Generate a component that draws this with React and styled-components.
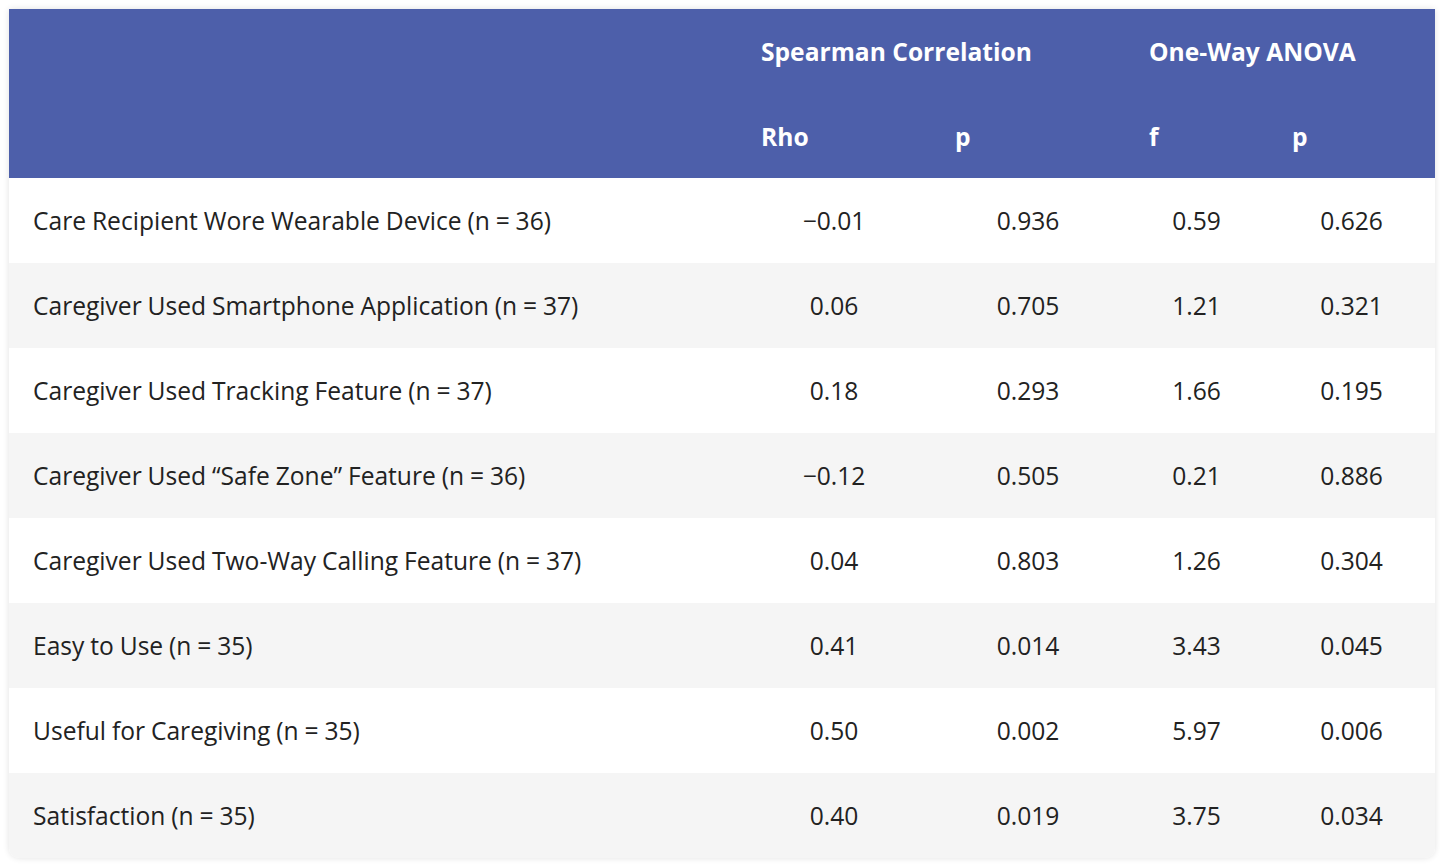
import React from "react";
import styled, { createGlobalStyle } from "styled-components";

const GlobalStyle = createGlobalStyle`
  html, body {
    margin: 0;
    padding: 0;
    background: #ffffff;
  }
  body {
    font-family: "Open Sans", "Noto Sans", sans-serif;
  }
`;

const Page = styled.div`
  padding: 9px 5px 8px 9px;
`;

const Card = styled.div`
  width: 1426px;
  border-radius: 0 0 10px 10px;
  overflow: hidden;
  box-shadow: 0 0 6px rgba(0, 0, 0, 0.12);
`;

const Table = styled.table`
  width: 100%;
  border-collapse: collapse;
  table-layout: fixed;
  font-size: 24.6px;
  color: #222222;
`;

const Head = styled.thead`
  background: #4d5faa;
  color: #ffffff;
`;

const HeadRow = styled.tr`
  height: ${({ $h }) => $h}px;
`;

const Th = styled.th`
  font-weight: 700;
  text-align: left;
  padding: 0 24px;
  vertical-align: middle;
  white-space: nowrap;
`;

const Row = styled.tr`
  height: 85px;
  background: ${({ $alt }) => ($alt ? "#f5f5f5" : "#ffffff")};
`;

const Label = styled.td`
  padding: 0 24px;
  white-space: nowrap;
  word-spacing: -0.5px;
`;

const Num = styled.td`
  text-align: center;
  padding: 0;
`;

const rows = [
  ["Care Recipient Wore Wearable Device (n = 36)", "\u22120.01", "0.936", "0.59", "0.626"],
  ["Caregiver Used Smartphone Application (n = 37)", "0.06", "0.705", "1.21", "0.321"],
  ["Caregiver Used Tracking Feature (n = 37)", "0.18", "0.293", "1.66", "0.195"],
  ["Caregiver Used \u201cSafe Zone\u201d Feature (n = 36)", "\u22120.12", "0.505", "0.21", "0.886"],
  ["Caregiver Used Two-Way Calling Feature (n = 37)", "0.04", "0.803", "1.26", "0.304"],
  ["Easy to Use (n = 35)", "0.41", "0.014", "3.43", "0.045"],
  ["Useful for Caregiving (n = 35)", "0.50", "0.002", "5.97", "0.006"],
  ["Satisfaction (n = 35)", "0.40", "0.019", "3.75", "0.034"],
];

export default function App() {
  return (
    <Page>
      <GlobalStyle />
      <Card>
        <Table>
          <colgroup>
            <col style={{ width: 728 }} />
            <col style={{ width: 194 }} />
            <col style={{ width: 194 }} />
            <col style={{ width: 143 }} />
            <col style={{ width: 167 }} />
          </colgroup>
          <Head>
            <HeadRow $h={85}>
              <Th />
              <Th colSpan={2}>Spearman Correlation</Th>
              <Th colSpan={2}>One-Way ANOVA</Th>
            </HeadRow>
            <HeadRow $h={84}>
              <Th />
              <Th>Rho</Th>
              <Th>p</Th>
              <Th>f</Th>
              <Th>p</Th>
            </HeadRow>
          </Head>
          <tbody>
            {rows.map((r, i) => (
              <Row key={i} $alt={i % 2 === 1}>
                <Label>{r[0]}</Label>
                <Num>{r[1]}</Num>
                <Num>{r[2]}</Num>
                <Num>{r[3]}</Num>
                <Num>{r[4]}</Num>
              </Row>
            ))}
          </tbody>
        </Table>
      </Card>
    </Page>
  );
}
